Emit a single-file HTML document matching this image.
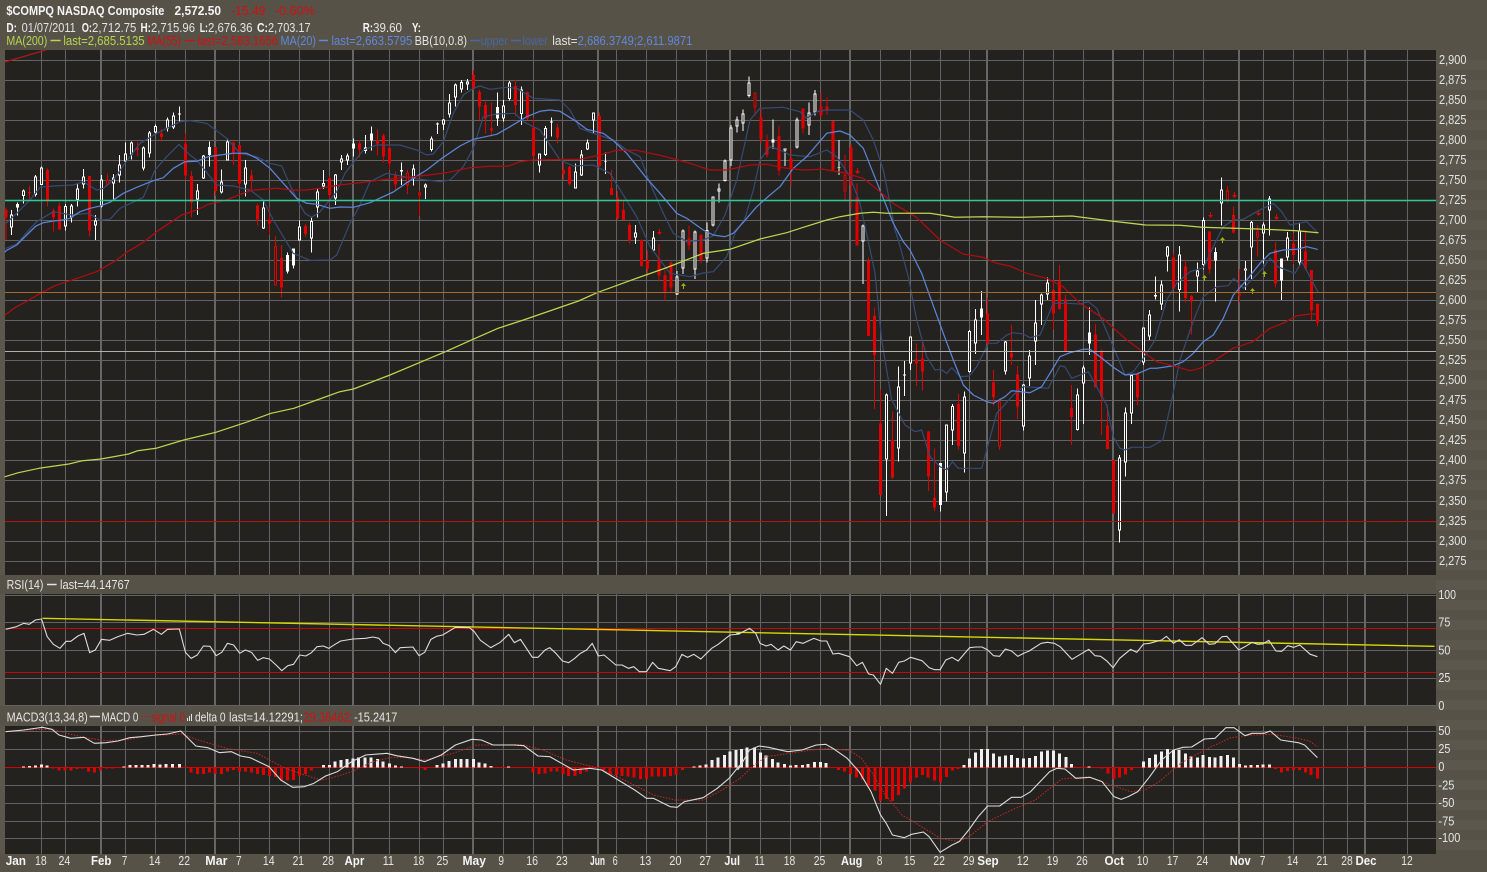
<!DOCTYPE html>
<html><head><meta charset="utf-8"><title>$COMPQ NASDAQ Composite</title>
<style>
html,body{margin:0;padding:0;background:#565248;width:1487px;height:872px;overflow:hidden}
svg{display:block;position:absolute;left:0;top:0}
text{font:12.5px "Liberation Sans",sans-serif;fill:#e4e4e4}
text.b{font-weight:bold;fill:#f4f4f4}
text.r{fill:#d01010}
text.g{fill:#b8d450}
text.u{fill:#6088dc}
text.d{fill:#4a66a4}
.c path{fill:none;shape-rendering:crispEdges}
.ww{stroke:#fff;stroke-width:3}
.wb{stroke:#fff;stroke-width:9}
.wi{stroke:#23221e;stroke-width:3}
.rw{stroke:#dc0000;stroke-width:3}
.rb{stroke:#e00000;stroke-width:9}
.l{fill:none;stroke-linejoin:round;stroke-linecap:round}
.n{vector-effect:non-scaling-stroke;fill:none}
.h{shape-rendering:crispEdges;stroke-width:3}
</style></head><body>
<svg width="1487" height="872" viewBox="0 0 1487 872">
<rect width="1487" height="872" fill="#565248"/>
<g fill="#5b574d">
<rect x="1436" y="60" width="51" height="10"/><rect x="1436" y="80" width="51" height="10"/><rect x="1436" y="100" width="51" height="10"/><rect x="1436" y="120" width="51" height="10"/><rect x="1436" y="140" width="51" height="10"/><rect x="1436" y="160" width="51" height="10"/><rect x="1436" y="180" width="51" height="10"/><rect x="1436" y="200" width="51" height="10"/><rect x="1436" y="220" width="51" height="10"/><rect x="1436" y="240" width="51" height="10"/><rect x="1436" y="260" width="51" height="10"/><rect x="1436" y="280" width="51" height="10"/><rect x="1436" y="300" width="51" height="10"/><rect x="1436" y="320" width="51" height="10"/><rect x="1436" y="340" width="51" height="10"/><rect x="1436" y="360" width="51" height="10"/><rect x="1436" y="380" width="51" height="10"/><rect x="1436" y="400" width="51" height="10"/><rect x="1436" y="420" width="51" height="10"/><rect x="1436" y="440" width="51" height="10"/><rect x="1436" y="460" width="51" height="10"/><rect x="1436" y="480" width="51" height="10"/><rect x="1436" y="500" width="51" height="10"/><rect x="1436" y="520" width="51" height="10"/><rect x="1436" y="540" width="51" height="10"/><rect x="1436" y="560" width="51" height="10"/><rect x="1436" y="580" width="51" height="10"/><rect x="1436" y="600" width="51" height="10"/><rect x="1436" y="620" width="51" height="10"/><rect x="1436" y="640" width="51" height="10"/><rect x="1436" y="660" width="51" height="10"/><rect x="1436" y="680" width="51" height="10"/><rect x="1436" y="700" width="51" height="10"/><rect x="1436" y="720" width="51" height="10"/><rect x="1436" y="740" width="51" height="10"/><rect x="1436" y="760" width="51" height="10"/><rect x="1436" y="780" width="51" height="10"/><rect x="1436" y="800" width="51" height="10"/><rect x="1436" y="820" width="51" height="10"/><rect x="1436" y="840" width="51" height="10"/>
</g>
<rect x="5" y="50" width="1431" height="804" fill="#23221e"/>

<!-- grid -->
<path fill="none" stroke="#636363" stroke-width="1" shape-rendering="crispEdges" d="M41.5 50V854M65.5 50V854M125.5 50V854M155.5 50V854M185.5 50V854M239.5 50V854M269.5 50V854M299.5 50V854M329.5 50V854M389.5 50V854M419.5 50V854M443.5 50V854M503.5 50V854M533.5 50V854M562.5 50V854M616.5 50V854M646.5 50V854M676.5 50V854M706.5 50V854M760.5 50V854M790.5 50V854M820.5 50V854M880.5 50V854M910.5 50V854M940.5 50V854M969.5 50V854M1023.5 50V854M1053.5 50V854M1083.5 50V854M1143.5 50V854M1173.5 50V854M1203.5 50V854M1263.5 50V854M1293.5 50V854M1323.5 50V854M1347.5 50V854M1407.5 50V854M5 60.5H1436M5 80.5H1436M5 100.5H1436M5 120.5H1436M5 140.5H1436M5 160.5H1436M5 180.5H1436M5 200.5H1436M5 220.5H1436M5 240.5H1436M5 260.5H1436M5 280.5H1436M5 300.5H1436M5 320.5H1436M5 340.5H1436M5 360.5H1436M5 380.5H1436M5 400.5H1436M5 420.5H1436M5 440.5H1436M5 460.5H1436M5 480.5H1436M5 501.5H1436M5 521.5H1436M5 541.5H1436M5 561.5H1436M5 595.5H1436M5 622.5H1436M5 650.5H1436M5 678.5H1436M5 705.5H1436M5 731.5H1436M5 749.5H1436M5 785.5H1436M5 803.5H1436M5 821.5H1436M5 838.5H1436"/>
<path fill="none" stroke="#666" stroke-width="2" shape-rendering="crispEdges" d="M101 50V854M215 50V854M353 50V854M473 50V854M598 50V854M730 50V854M850 50V854M987 50V854M1113 50V854M1239 50V854M1365 50V854"/>
<rect x="0" y="575" width="1436" height="19" fill="#565248"/>
<rect x="0" y="706" width="1436" height="20" fill="#565248"/>
<rect x="0" y="854" width="1436" height="18" fill="#565248"/>
<rect x="0" y="0" width="1487" height="50" fill="#565248"/>
<rect x="0" y="50" width="5" height="525" fill="#5b574d"/>
<rect x="0" y="594" width="5" height="112" fill="#5b574d"/>
<rect x="0" y="726" width="5" height="128" fill="#5b574d"/>

<!-- candles -->
<g class="c">
<g transform="translate(.167,100) scale(.33333)">
<path class="ww" d="M34 330V405M52 307V347M70 268V310M106 225V290M124 200V255M196 312V392M214 312V368M232 250V320M250 207V265M286 345V420M304 225V322M340 222V300M358 165V248M376 128V190M394 125V178M430 140V212M448 93V173M466 73V100M502 52V95M520 38V87M538 20V65M592 252V345M610 165V237M628 124V200M664 208V280M682 115V182M736 180V290M790 300V387M862 457V521M880 445V506M898 362V422M934 352V458M952 265V352"/>
<path class="wb" d="M34 343V383M52 312V323M70 271V288M106 229V285M124 202V255M196 318V380M214 316V352M232 265V300M250 230V254M286 361V377M304 238V320M340 232V250M358 194V226M376 160V185M394 127V163M430 142V206M448 97V161M466 78V97M502 58V86M520 46V83M538 40V43M592 271V299M610 167V235M628 141V165M664 244V277M682 124V181M736 202V254M790 322V385M862 465V515M880 445V497M898 379V421M934 363V416M952 274V322"/>
<path class="wi" d="M34 346V380M70 274V285M106 232V282M124 205V252M196 321V377M214 319V349M232 268V297M250 233V251M286 364V374M304 241V317M340 235V247M358 197V223M376 163V182M394 130V160M430 145V203M448 100V158M466 81V94M502 61V83M520 49V80M592 274V296M610 170V232M664 247V274M682 127V178M736 205V251M790 325V382M898 382V418M934 366V413M952 277V319"/>
<path class="rw" d="M18 322V420M88 258V297M142 205V320M160 325V395M178 308V388M268 228V410M322 220V258M412 124V170M484 87V125M556 100V240M574 213V352M646 141V288M700 125V195M718 135V270M754 210V270M772 310V375M808 322V405M826 408V557M844 435V593M916 372V411"/>
<path class="rb" d="M18 330V352M88 276V279M142 210V300M160 332V352M178 318V388M268 228V392M322 240V255M412 142V150M484 100V111M556 130V226M574 228V308M646 141V273M700 127V157M718 135V250M754 226V240M772 316V359M808 358V371M826 438V556M844 474V562M916 378V402"/>
<path class="wi" d="M322 243V252M826 441V553"/>
</g>
<g transform="translate(320.167,70) scale(.33333)">
<path class="ww" d="M10 300V357M46 312V405M64 255V300M82 250V285M100 205V260M136 195V250M154 170V242M244 277V345M280 283V347M316 340V387M334 200V245M352 158V192M370 147V180M388 72V142M406 40V110M424 30V68M442 27V60M532 68V168M550 90V155M568 33V92M604 50V165M658 250V308M676 168V258M694 142V200M766 280V356M784 240V318M802 208V240M820 127V190M856 247V312M946 465V522M1000 483V543"/>
<path class="wb" d="M10 339V349M46 314V386M64 265V277M82 257V272M100 220V235M136 232V243M154 190V212M244 300V305M280 296V325M316 343V352M334 205V240M352 160V163M370 149V163M388 97V134M406 43V82M424 36V58M442 34V44M532 111V146M550 106V145M568 37V87M604 58V132M658 250V286M676 174V255M694 155V157M766 304V356M784 253V317M802 218V238M820 127V152M856 274V276M946 487V502M1000 503V541"/>
<path class="wi" d="M10 342V346M46 317V383M64 268V274M82 260V269M136 235V240M280 299V322M316 346V349M334 208V237M370 152V160M388 100V131M406 46V79M424 39V55M442 37V41M550 109V142M568 40V84M604 61V129M658 253V283M676 177V252M766 307V353M784 256V314M802 221V235M820 130V149M946 490V499M1000 506V538"/>
<path class="rw" d="M28 320V400M118 210V262M172 178V257M190 190V278M208 225V300M226 305V363M262 300V372M298 362V438M460 0V60M478 60V150M496 95V190M514 98V200M586 30V140M622 65V150M640 142V265M712 160V220M730 278V330M748 288V347M838 128V290M874 300V375M892 363V448M910 393V450M928 458V520M964 508V590M982 542V620M1016 522V635M1034 600V692"/>
<path class="rb" d="M28 324V375M118 220V238M172 210V220M190 196V260M208 234V280M226 316V344M262 307V346M298 367V376M460 15V57M478 66V110M496 105V145M514 175V182M586 48V105M622 66V145M640 172V258M712 172V203M730 300V312M748 291V342M838 138V288M874 354V375M892 382V446M910 420V450M928 465V512M964 510V588M982 570V596M1016 565V616M1034 615V665"/>
<path class="wi" d="M262 310V343M298 370V373M514 178V179"/>
</g>
<g transform="translate(670.167,70) scale(.33333)">
<path class="ww" d="M20 603V675M38 478V612M74 482V627M110 458V577M128 380V470M146 340V398M164 268V335M182 165V288M200 140V188M218 118V183M236 20V83M308 148V237M344 235V288M380 142V235M416 97V195M434 60V137M506 210V315M578 463V642"/>
<path class="wb" d="M20 620V673M38 481V595M74 484V598M110 480V565M128 380V467M146 356V364M164 272V333M182 172V272M200 148V170M218 130V160M236 38V78M308 208V218M344 236V242M380 148V233M416 127V166M434 70V128M506 292V294M578 467V515"/>
<path class="wi" d="M20 623V670M38 484V592M74 487V595M110 483V562M128 383V464M146 359V361M164 275V330M182 175V269M200 151V167M218 133V157M236 41V75M344 238V240M380 151V230M416 130V163M434 73V125M578 470V512"/>
<path class="rw" d="M2 575V668M56 467V540M92 492V580M254 68V137M272 112V220M290 193V262M326 168V317M362 235V348M398 115V190M452 67V145M470 82V135M488 153V305M524 255V390M542 222V415M560 340V527"/>
<path class="rb" d="M2 578V652M56 505V527M92 495V570M254 68V112M272 142V207M290 212V255M326 198V302M362 265V300M398 115V176M452 110V135M470 110V122M488 153V300M524 315V365M542 232V345M560 382V527"/>
<path class="wi" d="M254 71V109M524 318V362"/>
</g>
<g transform="translate(850.167,240) scale(.33333)">
<path class="ww" d="M109 460V828M145 380V665M163 363V468M181 290V390M271 669V815M289 553V785M307 492V615M343 455V698M358 270V398M376 207V342M394 153V285M466 303V404M520 432V572M538 330V438M556 180V375M574 160V255M592 113V180M682 445V572M700 376V552M718 202V345M808 645V908M826 502V710M844 403V552M880 262V375M898 210V300"/>
<path class="wb" d="M109 463V658M145 439V626M163 403V407M181 290V370M271 669V795M289 554V758M307 498V572M343 469V640M358 273V396M376 238V311M394 205V233M466 304V395M520 433V560M538 346V416M556 247V305M574 163V193M592 127V163M682 463V570M700 382V430M718 277V311M808 652V872M826 517V667M844 405V520M880 263V368M898 224V290"/>
<path class="wi" d="M109 466V655M145 442V623M181 293V367M289 557V755M307 501V569M343 472V637M358 276V393M376 241V308M466 307V392M520 436V557M538 349V413M556 250V302M574 166V190M592 130V160M682 466V567M700 385V427M808 655V869M826 520V664M844 408V517M880 266V365M898 227V287"/>
<path class="rw" d="M55 52V288M73 202V507M91 448V765M127 515V717M199 310V438M217 305V452M235 573V753M253 625V813M325 462V628M412 172V315M430 390V497M448 475V630M484 255V375M502 378V537M610 118V268M628 75V208M646 165V335M664 435V615M736 252V443M754 328V585M772 495V627M790 660V820M862 397V497"/>
<path class="rb" d="M55 62V288M73 228V345M91 550V765M127 600V712M199 358V370M217 355V395M235 574V710M253 774V803M325 492V618M412 220V310M430 427V471M448 485V620M484 339V353M502 403V500M610 150V220M628 124V207M646 178V333M664 504V531M736 283V443M754 335V470M772 556V627M790 660V820M862 400V473"/>
<path class="wi" d="M448 488V617"/>
</g>
<g transform="translate(1100.167,170) scale(.33333)">
<path class="ww" d="M166 320V388M184 332V420M202 228V305M238 228V425M292 278V366M310 143V298M346 232V395M364 22V167M436 273V360M454 153V327M490 157V280M508 78V197M544 265V390M562 186V272M598 158V288"/>
<path class="wb" d="M166 375V380M184 344V403M202 229V260M238 253V360M292 302V320M310 150V285M346 246V272M364 58V101M436 295V301M454 156V233M490 163V190M508 85V122M544 265V332M562 203V262M598 182V278"/>
<path class="wi" d="M184 347V400M202 232V257M238 256V357M292 305V317M310 153V282M364 61V98M436 297V299M454 159V230M490 166V187M508 88V119M562 206V259M598 185V275"/>
<path class="rw" d="M220 250V360M256 268V398M274 375V493M328 183V310M382 48V98M400 110V190M418 297V398M472 165V260M526 216V352M580 190V282M616 180V300M634 300V450M652 400V470"/>
<path class="rb" d="M220 262V357M256 289V384M274 378V395M328 184V298M382 62V92M400 135V188M418 372V376M472 184V202M526 240V340M580 220V255M616 244V296M634 300V422M652 402V458"/>
<path class="wi" d="M382 65V89M472 187V199"/>
</g>
</g>

<!-- arrows -->
<path fill="#e00000" d="M1210 212h1v3h2l-2.5 3-2.5-3h2zM1234 192h1v3h2l-2.5 3-2.5-3h2zM1258 210h1v3h2l-2.5 3-2.5-3h2zM1276 214h1v3h2l-2.5 3-2.5-3h2zM857 168h1v3h2l-2.5 3-2.5-3h2zM659 229h1v3h2l-2.5 3-2.5-3h2z"/>
<path fill="#9ab800" d="M1204 281h1v-3h2l-2.5-3-2.5 3h2zM1222 243h1v-3h2l-2.5-3-2.5 3h2zM1252 294h1v-3h2l-2.5-3-2.5 3h2zM1264 277h1v-3h2l-2.5-3-2.5 3h2zM683 289h1v-3h2l-2.5-3-2.5 3h2z"/>

<!-- indicator lines -->
<path class="l" stroke="#374a74" stroke-width="1.2" d="M6 223.3 16.7 213.3 30 200 40 187.3 53.3 186 73.3 185 83.3 181.7 96.7 190 103.3 188.3 113.3 180 125 163.3 140 143.3 156.7 133.3 180 121.7 190 120.7 206.7 123.3 226.7 138.3 240 153.3 256.7 156.7 270 163.3 281.7 166 290 185 298.3 201.7 305 213.3 311.7 217.3 320 211.7 336.7 191.7 345 173.3 363.3 150 376.7 145 400 145 416.7 150 426.7 155 433.3 154 443.3 141.7 453.3 113.3 463.3 95 473.3 88.3 480 86 490 89.3 506.7 87.3 516.7 88.3 533.3 98.3 560 100 570 110 580 128.3 593.3 133.3 613.3 140 626.7 150 640 156.7 650 183.3 663.3 213.3 673.3 233.3 686.7 241.7 703.3 240 713.3 235.7 725 215 736.7 180 750 120 760 108.3 783.3 107.3 800 111.7 806.7 118.3 816.7 111.7 826.7 110 850 110 863.3 120 873.3 140 883.3 170 890 203 895 230 898.3 240 908.3 276.7 916.7 320 926.7 356.7 935 370 940.7 369.3 946.7 373.3 951.7 367.7 960 376.7 969.3 376 976.7 366.7 988.3 343.3 996.7 343.3 1006.7 335 1013.3 332.7 1023.3 334 1030 337.7 1040 335 1053.3 303.3 1066.7 303.3 1080 304 1088.3 301.7 1096.7 308.3 1113.3 346.7 1125 375 1133.3 371.7 1143.3 358.3 1155 340 1166.7 300 1176.7 283.3 1190 271.7 1203.3 267.7 1213.3 246.7 1223.3 226.7 1233.3 220 1243.3 219.3 1256.7 211.7 1273.3 203.3 1281.7 211.7 1290 225 1306.7 221.7 1317.3 232.3"/>
<path class="l" stroke="#374a74" stroke-width="1.2" d="M6 248.3 16.7 244 28.3 230.7 36.7 221.7 53.3 211.7 71.7 215 88.3 213.3 100 220 110 219.3 120 208.3 143.3 197.3 155 170 166.7 156.7 179 144.3 190 155 196.7 160 216.7 185 233.3 186 250 190 263.3 200 273.3 220 283.3 236.7 293.3 253.3 310 260.3 330 260 336.7 255 350 223.3 360 205 370 181.7 386.7 173.3 413.3 178.3 440 181.7 450 180 463.3 166.7 473.3 148.3 483.3 116.7 496.7 114 515 113.3 523.3 121.7 540 130 560 160 573.3 166 593.3 165 610 173.3 636.7 216.7 650 246.7 670 273.3 690 276.7 703 273 713.3 271.7 726.7 256.7 735 233.3 745 218.3 753.3 190 760 160 770 146.7 780 150 790 155 810 156.7 826.7 150 836.7 156.7 850 176.7 860 203.3 865 226.7 868 240 875 273 881.7 340 891.7 400 905 425 915 431.7 921.7 430 930 456.7 940 466.7 946.7 470 952.3 461.7 958.3 468.3 981.7 468.3 996.7 413.3 1013.3 395 1023.3 386.7 1048.3 388.3 1060 366 1065 366.7 1071.7 378.3 1088.3 371.7 1106.7 405 1113.3 436.7 1120 448.3 1125 450 1131.7 447.3 1150 447.3 1162.8 440 1171.7 400 1180 360 1186.7 340 1195 316.7 1203.3 296.7 1216.6 286.7 1228.3 285.7 1233.7 278.3 1243.5 288.3 1263 268 1270 258 1277.7 266.7 1294.9 273.3 1302 261.7 1317.8 291.7"/>
<path class="l" stroke="#5b84d8" stroke-width="1.25" d="M5 252 6 250.7 16.7 245 26.7 235 36 226 43.3 222.7 53.3 221 63.3 220 70 218.3 80 211.7 90 208.3 100 206 110 202.3 123.3 193.3 136.7 187.3 153.3 180.7 163.3 177.7 173.3 168.3 185 161.7 196.7 161.3 208.3 156.7 220 155 233.3 153.3 246.7 153.3 256.7 158.3 270 168.3 283.3 183.3 296.7 198.3 306.7 203.3 316.7 204.3 330 208.3 340 207 353.3 207.3 370 202.7 393.3 192 413.3 178.3 426.7 170 443.3 157.3 460 146 473.3 139.3 496.7 134.3 510 126.7 526.7 116.7 540 111.3 550 110 560 111.3 576.7 121.7 586.7 129.3 603.3 133.3 613.3 140.7 626.7 153.3 646.7 178.3 660 193.3 676.7 213.3 686.7 218.3 703.3 230 713.3 235 725 236.7 733.3 233.3 743.3 222.3 756.7 206.7 770 195 780 186.7 793.3 168.3 806.7 156.7 816.7 145 826.7 133.3 840 131 850 135 863.3 148.3 873.3 173.3 883.3 198.3 893.3 223.3 903.3 241.7 910 250 921.7 273.3 930 296.7 943.3 333.3 953.3 360 963.3 385 973.3 395 986.7 401.7 993.3 403.3 1005 396.7 1011.7 390.7 1030 392.7 1041.7 386.7 1050 373.3 1060 356.7 1070 352.7 1083.3 349.3 1090 349.3 1100 356.7 1113.3 367.3 1125 375 1136.7 374 1150 368.3 1156.7 368.3 1173.3 365.7 1183.3 361.7 1193.3 353.3 1203.3 341.7 1213.3 335 1223.3 318.3 1233.3 295 1246.7 280 1260 263.3 1270 253.3 1283.3 250 1296.7 249.3 1306.7 246.7 1317.3 249.3"/>
<path class="l" stroke="#b00c10" stroke-width="1.25" d="M5 315 16 307 27.5 301 32 298 41.7 292.7 55 285.7 70 280.7 96.7 271.7 116.7 260 126.7 252.3 143.3 242.3 156.7 231.7 170 222.7 181.7 215 196.7 210 208.3 204.3 226.7 200 240 194.3 251.7 190.3 266.7 189 276.7 188.3 293.3 190.3 306.7 190 320 188.3 340 185 363 182.3 386.7 179.3 420 176 446.7 172.7 470 167.7 490 166.3 508 166.3 520 161.7 533 160 580 159.3 600 155 616.7 150.3 636.7 150.3 663 156 690 163.3 710 170 726.7 170 750 165 766.7 164.3 783.3 167.7 803 170 823 169.3 843.3 172.7 863.3 178.3 880 191.7 893 203.3 910 213.3 915.7 216.7 940 240 963 254 983 257.3 996.7 263.3 1010 266 1026.7 273.3 1046.7 278.3 1063 286.7 1080 303.3 1103 318.3 1126.7 340 1156.7 361.7 1173 365.7 1190 370.7 1200 368.3 1213 361.7 1233 348.3 1253 341.7 1270 328.3 1283 323.3 1296.7 315.7 1310 314 1317 314"/>
<path class="l" stroke="#bcd850" stroke-width="1.25" d="M5 476.7 18.4 472.7 39 468.3 68.9 464 82.6 460.7 101 459 128.6 454 137.7 450.7 156 448.3 183.7 440 215.8 432.3 248 421.7 271 413.3 293.8 408.3 316.8 400 339.8 391.7 353.5 389 390 375 417.8 363.3 445.4 351.7 473 339.3 498 328.3 523.4 320 578.5 301 597 292.7 633.6 279.3 665.7 268 703.3 253.3 730 249.3 760 239 786.7 232.7 803.3 227.3 826.7 220 840 216.7 860 213.3 873.3 212.3 886.7 213.3 910 213.3 930 213.3 955 217.3 984 216.7 1023 217.3 1072 216 1111 221 1145.6 225 1180 225.3 1202 227.3 1258 229 1297 230.7 1318 232.7"/>
<path fill="none" stroke="#a81a1a" stroke-width="1.3" d="M5 62 46 50"/>
<path stroke="#2fc896" stroke-width="1.4" d="M5 200.5H1436"/>
<path stroke="#a8682c" stroke-width="1" shape-rendering="crispEdges" d="M5 292.5H1436"/>
<path stroke="#b0b0ac" stroke-width="1" shape-rendering="crispEdges" d="M5 351.5H1436"/>
<path stroke="#b01414" stroke-width="1" shape-rendering="crispEdges" d="M5 521.5H1436"/>

<!-- RSI -->
<path stroke="#c80808" stroke-width="1" shape-rendering="crispEdges" d="M5 628.5H1436M5 672.5H1436"/>
<path fill="none" stroke="#d8d800" stroke-width="1.4" d="M42.5 618.3 1434.6 646.3"/>
<g transform="translate(0,575) scale(.4719,.33333)"><path class="n" stroke="#dcdcdc" stroke-width="1.1" stroke-linejoin="round" d="M12 163 35 155 50 145 62 148 75 135 88 132 100 185 113 208 127 220 140 199 150 199 165 183 178 175 190 233 202 225 215 193 232 196 250 185 270 175 290 180 305 178 325 163 342 178 355 163 380 162 393 232 405 250 418 240 431 213 445 214 458 242 470 232 482 205 495 210 508 235 520 225 533 232 546 256 558 248 571 252 585 270 597 287 610 272 622 268 635 240 648 243 660 233 672 215 685 213 697 220 710 208 722 198 748 192 775 190 790 186 803 190 812 205 825 212 838 233 848 218 875 216 888 242 900 232 913 193 925 184 938 180 965 157 995 158 1005 170 1018 196 1040 218 1060 202 1078 178 1090 203 1103 193 1128 247 1140 247 1155 225 1165 218 1178 235 1192 258 1205 263 1218 250 1230 235 1243 225 1255 205 1268 243 1280 240 1305 270 1318 270 1332 280 1343 275 1355 290 1370 290 1383 262 1395 280 1420 287 1432 275 1445 238 1457 247 1470 238 1485 252 1508 220 1522 208 1547 180 1568 177"/></g>
<g transform="translate(740,575) scale(.4764,.33333)"><path class="n" stroke="#dcdcdc" stroke-width="1.1" stroke-linejoin="round" d="M-8 176 0 175 20 160 33 175 42 205 55 213 65 208 80 225 92 213 106 225 118 200 132 205 155 190 170 198 182 198 195 237 207 235 230 245 245 272 257 262 270 297 280 300 295 328 307 280 320 295 333 262 345 258 358 247 382 257 397 278 408 284 420 284 432 255 445 247 458 258 482 218 495 216 508 216 520 225 532 242 545 244 557 222 570 228 583 244 595 235 607 228 632 205 645 202 660 205 672 215 697 253 732 223 745 242 757 244 770 258 783 278 797 250 820 223 833 232 847 207 860 205 885 195 895 184 910 205 922 194 935 211 948 211 970 188 985 208 997 206 1012 185 1022 184 1047 225 1060 215 1075 202 1087 208 1097 207 1110 196 1125 228 1137 229 1150 212 1162 217 1175 210 1197 238 1212 245"/></g>

<!-- MACD -->
<path stroke="#d80000" stroke-width="1" shape-rendering="crispEdges" d="M5 767.5H1436"/>
<g transform="translate(0,575) scale(.4719,.33333)">
<path class="n h" stroke="#f0f0f0" d="M50 574V577M62 573V577M75 572V577M88 568V577M100 572V577M263 574V577M276 570V577M288 570V577M301 570V577M314 570V577M326 567V577M339 569V577M352 567V577M366 567V577M380 567V577M685 570V577M698 570V577M710 560V577M723 555V577M735 552V577M748 550V577M760 548V577M773 548V577M786 548V577M800 552V577M812 560V577M825 565V577M838 572V577M851 574V577M926 570V577M939 565V577M952 558V577M965 552V577M977 552V577M990 552V577M1003 552V577M1015 562V577M1028 565V577M1040 573V577M1078 574V577M1471 574V577M1483 572V577M1496 568V577M1509 555V577M1522 548V577M1535 540V577M1547 530V577M1560 525V577"/>
<path class="n h" stroke="#e00000" d="M112 577V580M125 577V587M138 577V587M150 577V586M163 577V582M175 577V581M188 577V590M200 577V593M213 577V587M226 577V580M238 577V580M405 577V593M418 577V597M431 577V597M444 577V593M456 577V597M469 577V597M482 577V590M495 577V585M507 577V590M520 577V590M533 577V593M546 577V597M558 577V600M571 577V603M584 577V606M597 577V615M609 577V617M622 577V615M635 577V603M647 577V597M660 577V587M888 577V580M901 577V585M1130 577V592M1142 577V597M1155 577V595M1168 577V590M1180 577V590M1193 577V597M1205 577V603M1218 577V603M1230 577V597M1243 577V590M1280 577V585M1293 577V597M1306 577V600M1318 577V603M1331 577V605M1344 577V607M1357 577V612M1370 577V612M1382 577V605M1395 577V605M1408 577V605M1421 577V603M1433 577V600M1446 577V585"/>
<path class="n" stroke="#d02424" stroke-width="1" stroke-dasharray="1.5 1.5" d="M12 470 60 465 110 462 150 478 190 490 225 497 265 495 310 483 385 477 420 495 480 520 545 535 600 577 640 597 680 615 700 610 745 590 790 560 830 547 870 548 900 555 960 535 1010 510 1060 510 1105 508 1150 525 1200 555 1270 580 1330 620 1385 660 1430 675 1490 675 1530 645 1568 610"/>
<path class="n" stroke="#dcdcdc" stroke-width="1.1" stroke-linejoin="round" d="M12 470 50 465 90 457 110 463 125 480 150 490 178 487 200 505 225 503 250 498 275 488 300 485 330 480 355 477 383 468 415 513 440 518 465 533 490 530 510 543 530 548 570 575 595 615 620 637 645 635 665 625 690 603 715 590 745 560 775 540 820 535 840 542 875 550 900 560 935 540 965 510 1000 493 1020 495 1045 510 1090 510 1110 512 1140 543 1165 545 1190 565 1215 585 1250 580 1275 585 1310 615 1345 645 1370 670 1385 670 1420 695 1435 697 1450 680 1490 668 1520 640 1545 610 1568 570"/>
</g>
<g transform="translate(740,575) scale(.4764,.33333)">
<path class="n h" stroke="#f0f0f0" d="M3 522V577M15 518V577M30 517V577M43 532V577M55 542V577M68 552V577M80 562V577M93 567V577M106 572V577M118 570V577M131 570V577M143 567V577M156 561V577M169 561V577M181 564V577M470 570V577M482 550V577M494 532V577M507 522V577M520 522V577M532 535V577M545 545V577M557 542V577M570 540V577M582 549V577M595 551V577M608 549V577M620 543V577M633 530V577M645 527V577M658 527V577M671 535V577M684 546V577M696 567V577M733 574V577M847 560V577M860 549V577M872 538V577M885 530V577M897 522V577M910 525V577M922 525V577M935 535V577M947 545V577M960 547V577M972 540V577M985 546V577M997 548V577M1010 543V577M1023 540V577M1036 548V577M1048 567V577M1061 572V577M1073 570V577M1086 570V577M1098 569V577M1111 568V577"/>
<path class="n h" stroke="#e00000" d="M207 577V585M219 577V590M232 577V597M245 577V608M257 577V613M270 577V635M283 577V647M295 577V678M308 577V672M320 577V678M333 577V660M345 577V640M358 577V622M370 577V608M383 577V600M395 577V608M408 577V617M421 577V622M433 577V606M446 577V587M458 577V582M760 577V580M772 577V595M785 577V612M797 577V607M809 577V598M822 577V585M1124 577V582M1137 577V592M1149 577V588M1162 577V585M1174 577V585M1187 577V592M1199 577V600M1212 577V610"/>
<path class="n" stroke="#d02424" stroke-width="1" stroke-dasharray="1.5 1.5" d="M0 610 30 570 55 545 105 535 150 525 185 520 230 527 255 550 280 600 305 660 340 720 370 745 420 790 460 800 485 780 520 740 570 705 620 675 675 612 730 605 770 625 820 650 850 645 880 620 925 565 975 525 1030 488 1075 480 1120 478 1170 490 1195 498 1212 515"/>
<path class="n" stroke="#dcdcdc" stroke-width="1.1" stroke-linejoin="round" d="M-5 585 0 575 20 525 40 513 60 517 100 530 130 525 160 510 180 508 195 520 225 550 250 590 275 650 295 720 307 745 320 780 345 788 360 778 385 771 397 785 420 832 445 810 460 800 480 765 500 725 520 693 545 693 570 667 590 667 610 650 650 590 665 580 682 582 705 610 735 607 760 620 785 665 800 673 815 665 835 650 860 605 885 555 910 525 930 517 948 516 975 492 997 490 1020 458 1037 458 1060 482 1075 475 1100 475 1113 468 1135 495 1172 503 1185 510 1212 548"/>
</g>

<!-- header text -->
<text class="b" x="6.4" y="15" textLength="158" lengthAdjust="spacingAndGlyphs">$COMPQ NASDAQ Composite</text>
<text class="b" x="174.5" y="15" textLength="46.5" lengthAdjust="spacingAndGlyphs">2,572.50</text>
<text class="r" x="231" y="15" textLength="34.4" lengthAdjust="spacingAndGlyphs">-15.49</text>
<text class="r" x="274.6" y="15" textLength="40.4" lengthAdjust="spacingAndGlyphs">-0.60%</text>
<text class="b" x="6.4" y="32" textLength="10.6" lengthAdjust="spacingAndGlyphs">D:</text>
<text x="21.6" y="32" textLength="54.2" lengthAdjust="spacingAndGlyphs">01/07/2011</text>
<text class="b" x="81.7" y="32" textLength="10.3" lengthAdjust="spacingAndGlyphs">O:</text>
<text x="92" y="32" textLength="44.4" lengthAdjust="spacingAndGlyphs">2,712.75</text>
<text class="b" x="140.5" y="32" textLength="10.5" lengthAdjust="spacingAndGlyphs">H:</text>
<text x="151" y="32" textLength="44" lengthAdjust="spacingAndGlyphs">2,715.96</text>
<text class="b" x="199.7" y="32" textLength="8.3" lengthAdjust="spacingAndGlyphs">L:</text>
<text x="208" y="32" textLength="44.5" lengthAdjust="spacingAndGlyphs">2,676.36</text>
<text class="b" x="257" y="32" textLength="11" lengthAdjust="spacingAndGlyphs">C:</text>
<text x="268" y="32" textLength="42.6" lengthAdjust="spacingAndGlyphs">2,703.17</text>
<text class="b" x="362.7" y="32" textLength="10.3" lengthAdjust="spacingAndGlyphs">R:</text>
<text x="373" y="32" textLength="29" lengthAdjust="spacingAndGlyphs">39.60</text>
<text class="b" x="412" y="32" textLength="9" lengthAdjust="spacingAndGlyphs">Y:</text>

<text class="g" x="6.4" y="45" textLength="40.9" lengthAdjust="spacingAndGlyphs">MA(200)</text>
<path stroke="#b8d450" stroke-width="1.5" d="M50.5 40.5H60.6"/>
<text class="g" x="63.4" y="45" textLength="81.2" lengthAdjust="spacingAndGlyphs">last=2,685.5135</text>
<text class="r" x="147" y="45" textLength="34" lengthAdjust="spacingAndGlyphs">MA(55)</text>
<path stroke="#d01010" stroke-width="1.5" d="M185 40.5H195"/>
<text class="r" x="197.4" y="45" textLength="80.6" lengthAdjust="spacingAndGlyphs">last=2,583.1656</text>
<text class="u" x="280.5" y="45" textLength="35.5" lengthAdjust="spacingAndGlyphs">MA(20)</text>
<path stroke="#6088dc" stroke-width="1.5" d="M319 40.5H328"/>
<text class="u" x="331.5" y="45" textLength="80.8" lengthAdjust="spacingAndGlyphs">last=2,663.5795</text>
<text x="414.6" y="45" textLength="52.4" lengthAdjust="spacingAndGlyphs">BB(10,0.8)</text>
<path stroke="#4a66a4" stroke-width="1.5" d="M470 40.5H480"/>
<text class="d" x="480.7" y="45" textLength="27.3" lengthAdjust="spacingAndGlyphs">upper</text>
<path stroke="#4a66a4" stroke-width="1.5" d="M511 40.5H521"/>
<text class="d" x="522.5" y="45" textLength="25.2" lengthAdjust="spacingAndGlyphs">lower</text>
<text x="552.3" y="45" textLength="25.3" lengthAdjust="spacingAndGlyphs">last=</text>
<text class="u" x="577.6" y="45" textLength="114.8" lengthAdjust="spacingAndGlyphs">2,686.3749;2,611.9871</text>

<text x="6.6" y="589" textLength="36.8" lengthAdjust="spacingAndGlyphs">RSI(14)</text>
<path stroke="#e4e4e4" stroke-width="1.5" d="M47 584.5H56.6"/>
<text x="60" y="589" textLength="69.8" lengthAdjust="spacingAndGlyphs">last=44.14767</text>

<text x="6.6" y="721.5" textLength="81.2" lengthAdjust="spacingAndGlyphs">MACD3(13,34,8)</text>
<path stroke="#e4e4e4" stroke-width="1.5" d="M89.7 716.5H100"/>
<text x="101.5" y="721.5" textLength="36.8" lengthAdjust="spacingAndGlyphs">MACD 0</text>
<path stroke="#d01010" stroke-width="1" stroke-dasharray="1 1" d="M139.7 716.5H150"/>
<text class="r" x="151" y="721.5" textLength="34" lengthAdjust="spacingAndGlyphs">signal 0</text>
<path stroke="#e4e4e4" stroke-width="1" shape-rendering="crispEdges" d="M187.5 721V718M189.5 721V716M191.5 721V714"/>
<text x="195" y="721.5" textLength="30.6" lengthAdjust="spacingAndGlyphs">delta 0</text>
<text x="229" y="721.5" textLength="74" lengthAdjust="spacingAndGlyphs">last=14.12291;</text>
<text class="r" x="303.4" y="721.5" textLength="49.6" lengthAdjust="spacingAndGlyphs">29.36462;</text>
<text x="354" y="721.5" textLength="43.4" lengthAdjust="spacingAndGlyphs">-15.2417</text>

<!-- price axis -->
<g>
<text x="1439" y="64" textLength="27.5" lengthAdjust="spacingAndGlyphs">2,900</text>
<text x="1439" y="84" textLength="27.5" lengthAdjust="spacingAndGlyphs">2,875</text>
<text x="1439" y="104" textLength="27.5" lengthAdjust="spacingAndGlyphs">2,850</text>
<text x="1439" y="124" textLength="27.5" lengthAdjust="spacingAndGlyphs">2,825</text>
<text x="1439" y="144" textLength="27.5" lengthAdjust="spacingAndGlyphs">2,800</text>
<text x="1439" y="164" textLength="27.5" lengthAdjust="spacingAndGlyphs">2,775</text>
<text x="1439" y="184" textLength="27.5" lengthAdjust="spacingAndGlyphs">2,750</text>
<text x="1439" y="204" textLength="27.5" lengthAdjust="spacingAndGlyphs">2,725</text>
<text x="1439" y="224" textLength="27.5" lengthAdjust="spacingAndGlyphs">2,700</text>
<text x="1439" y="244" textLength="27.5" lengthAdjust="spacingAndGlyphs">2,675</text>
<text x="1439" y="264" textLength="27.5" lengthAdjust="spacingAndGlyphs">2,650</text>
<text x="1439" y="284" textLength="27.5" lengthAdjust="spacingAndGlyphs">2,625</text>
<text x="1439" y="304" textLength="27.5" lengthAdjust="spacingAndGlyphs">2,600</text>
<text x="1439" y="324" textLength="27.5" lengthAdjust="spacingAndGlyphs">2,575</text>
<text x="1439" y="344" textLength="27.5" lengthAdjust="spacingAndGlyphs">2,550</text>
<text x="1439" y="364" textLength="27.5" lengthAdjust="spacingAndGlyphs">2,525</text>
<text x="1439" y="384" textLength="27.5" lengthAdjust="spacingAndGlyphs">2,500</text>
<text x="1439" y="404" textLength="27.5" lengthAdjust="spacingAndGlyphs">2,475</text>
<text x="1439" y="424" textLength="27.5" lengthAdjust="spacingAndGlyphs">2,450</text>
<text x="1439" y="444" textLength="27.5" lengthAdjust="spacingAndGlyphs">2,425</text>
<text x="1439" y="464" textLength="27.5" lengthAdjust="spacingAndGlyphs">2,400</text>
<text x="1439" y="484" textLength="27.5" lengthAdjust="spacingAndGlyphs">2,375</text>
<text x="1439" y="505" textLength="27.5" lengthAdjust="spacingAndGlyphs">2,350</text>
<text x="1439" y="525" textLength="27.5" lengthAdjust="spacingAndGlyphs">2,325</text>
<text x="1439" y="545" textLength="27.5" lengthAdjust="spacingAndGlyphs">2,300</text>
<text x="1439" y="565" textLength="27.5" lengthAdjust="spacingAndGlyphs">2,275</text>
<text x="1438.4" y="599" textLength="17.6" lengthAdjust="spacingAndGlyphs">100</text>
<text x="1438.4" y="626.5" textLength="12" lengthAdjust="spacingAndGlyphs">75</text>
<text x="1438.4" y="654.5" textLength="12" lengthAdjust="spacingAndGlyphs">50</text>
<text x="1438.4" y="682" textLength="12" lengthAdjust="spacingAndGlyphs">25</text>
<text x="1438.4" y="710" textLength="6" lengthAdjust="spacingAndGlyphs">0</text>
<text x="1438.4" y="735" textLength="12" lengthAdjust="spacingAndGlyphs">50</text>
<text x="1438.4" y="753" textLength="12" lengthAdjust="spacingAndGlyphs">25</text>
<text x="1438.4" y="771" textLength="6" lengthAdjust="spacingAndGlyphs">0</text>
<text x="1438.4" y="789.5" textLength="16" lengthAdjust="spacingAndGlyphs">-25</text>
<text x="1438.4" y="807" textLength="16" lengthAdjust="spacingAndGlyphs">-50</text>
<text x="1438.4" y="825.5" textLength="16" lengthAdjust="spacingAndGlyphs">-75</text>
<text x="1438.4" y="842" textLength="22" lengthAdjust="spacingAndGlyphs">-100</text>
</g>

<!-- date axis -->
<g>
<text class="b" x="5.7" y="865" textLength="20.3" lengthAdjust="spacingAndGlyphs">Jan</text>
<text x="35" y="865" textLength="11.7" lengthAdjust="spacingAndGlyphs">18</text>
<text x="58.5" y="865" textLength="11.8" lengthAdjust="spacingAndGlyphs">24</text>
<text class="b" x="91" y="865" textLength="20.4" lengthAdjust="spacingAndGlyphs">Feb</text>
<text x="121.8" y="865" textLength="5.6" lengthAdjust="spacingAndGlyphs">7</text>
<text x="148.7" y="865" textLength="11.8" lengthAdjust="spacingAndGlyphs">14</text>
<text x="178.4" y="865" textLength="11.6" lengthAdjust="spacingAndGlyphs">22</text>
<text class="b" x="205.3" y="865" textLength="22.2" lengthAdjust="spacingAndGlyphs">Mar</text>
<text x="236" y="865" textLength="5.6" lengthAdjust="spacingAndGlyphs">7</text>
<text x="262.9" y="865" textLength="11.8" lengthAdjust="spacingAndGlyphs">14</text>
<text x="292.6" y="865" textLength="11.4" lengthAdjust="spacingAndGlyphs">21</text>
<text x="322.3" y="865" textLength="11.7" lengthAdjust="spacingAndGlyphs">28</text>
<text class="b" x="344.5" y="865" textLength="19.8" lengthAdjust="spacingAndGlyphs">Apr</text>
<text x="382.7" y="865" textLength="11.3" lengthAdjust="spacingAndGlyphs">11</text>
<text x="413" y="865" textLength="11.3" lengthAdjust="spacingAndGlyphs">18</text>
<text x="436.5" y="865" textLength="11.8" lengthAdjust="spacingAndGlyphs">25</text>
<text class="b" x="462.5" y="865" textLength="23.5" lengthAdjust="spacingAndGlyphs">May</text>
<text x="498.4" y="865" textLength="5.6" lengthAdjust="spacingAndGlyphs">9</text>
<text x="526.2" y="865" textLength="11.8" lengthAdjust="spacingAndGlyphs">16</text>
<text x="556" y="865" textLength="11.7" lengthAdjust="spacingAndGlyphs">23</text>
<text class="b" x="590" y="865" textLength="15" lengthAdjust="spacingAndGlyphs">Jun</text>
<text x="612.6" y="865" textLength="5.1" lengthAdjust="spacingAndGlyphs">6</text>
<text x="639.5" y="865" textLength="11.8" lengthAdjust="spacingAndGlyphs">13</text>
<text x="669.2" y="865" textLength="12.3" lengthAdjust="spacingAndGlyphs">20</text>
<text x="699.4" y="865" textLength="11.8" lengthAdjust="spacingAndGlyphs">27</text>
<text class="b" x="724.4" y="865" textLength="15.6" lengthAdjust="spacingAndGlyphs">Jul</text>
<text x="754.3" y="865" textLength="10.5" lengthAdjust="spacingAndGlyphs">11</text>
<text x="783.8" y="865" textLength="11.5" lengthAdjust="spacingAndGlyphs">18</text>
<text x="813.8" y="865" textLength="11.5" lengthAdjust="spacingAndGlyphs">25</text>
<text class="b" x="841" y="865" textLength="21.4" lengthAdjust="spacingAndGlyphs">Aug</text>
<text x="876.7" y="865" textLength="5.7" lengthAdjust="spacingAndGlyphs">8</text>
<text x="903.9" y="865" textLength="11.4" lengthAdjust="spacingAndGlyphs">15</text>
<text x="933.4" y="865" textLength="11.5" lengthAdjust="spacingAndGlyphs">22</text>
<text x="963" y="865" textLength="11.4" lengthAdjust="spacingAndGlyphs">29</text>
<text class="b" x="977.3" y="865" textLength="21.4" lengthAdjust="spacingAndGlyphs">Sep</text>
<text x="1016.8" y="865" textLength="11.9" lengthAdjust="spacingAndGlyphs">12</text>
<text x="1046.8" y="865" textLength="11.5" lengthAdjust="spacingAndGlyphs">19</text>
<text x="1076.3" y="865" textLength="11.5" lengthAdjust="spacingAndGlyphs">26</text>
<text class="b" x="1104.5" y="865" textLength="19.5" lengthAdjust="spacingAndGlyphs">Oct</text>
<text x="1136.8" y="865" textLength="11.5" lengthAdjust="spacingAndGlyphs">10</text>
<text x="1166.9" y="865" textLength="11.4" lengthAdjust="spacingAndGlyphs">17</text>
<text x="1196.4" y="865" textLength="11.9" lengthAdjust="spacingAndGlyphs">24</text>
<text class="b" x="1229.8" y="865" textLength="20.9" lengthAdjust="spacingAndGlyphs">Nov</text>
<text x="1259.8" y="865" textLength="5.7" lengthAdjust="spacingAndGlyphs">7</text>
<text x="1286.9" y="865" textLength="11.5" lengthAdjust="spacingAndGlyphs">14</text>
<text x="1316.5" y="865" textLength="11.4" lengthAdjust="spacingAndGlyphs">21</text>
<text x="1341.2" y="865" textLength="11.5" lengthAdjust="spacingAndGlyphs">28</text>
<text class="b" x="1355.5" y="865" textLength="21" lengthAdjust="spacingAndGlyphs">Dec</text>
<text x="1401.3" y="865" textLength="11.4" lengthAdjust="spacingAndGlyphs">12</text>
</g>
</svg>
</body></html>
